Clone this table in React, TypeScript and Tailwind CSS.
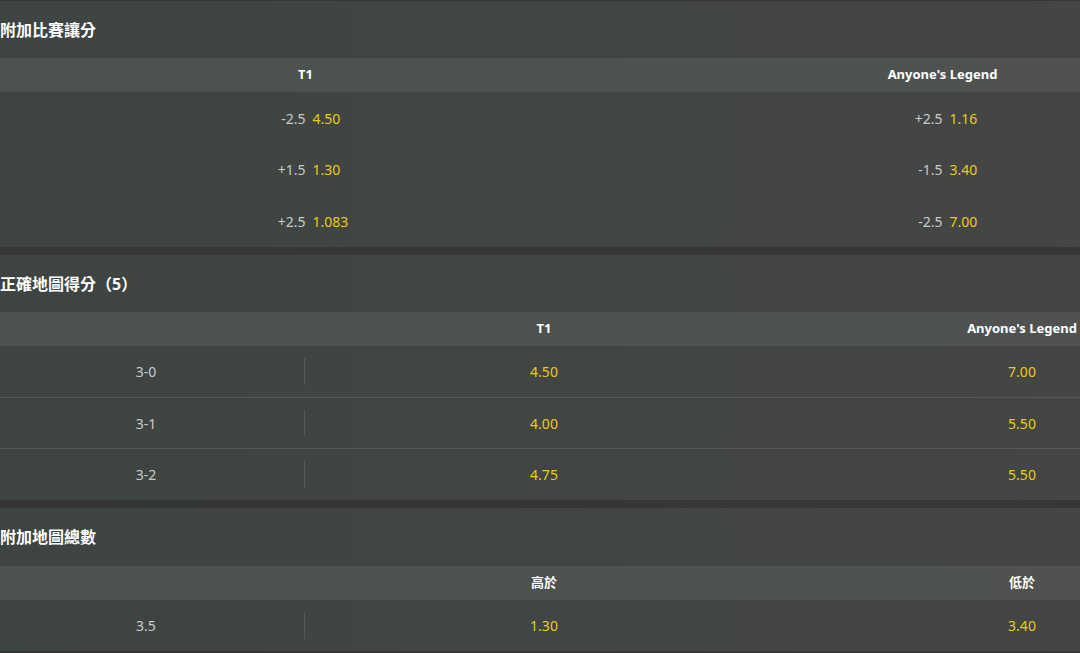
import React from "react";

const font = { fontFamily: '"Noto Sans", "Open Sans", "Noto Sans CJK TC", sans-serif' };

function Title({ text, h = "h-[57px]" }: { text: string; h?: string }) {
  return (
    <div className={`${h} flex items-center pl-[13px] text-[16px] font-bold text-white`}>
      {text}
    </div>
  );
}

function HandicapSection() {
  const rows = [
    ["-2.5", "4.50", "+2.5", "1.16", "h-[52px]"],
    ["+1.5", "1.30", "-1.5", "3.40", "h-[51px]"],
    ["+2.5", "1.083", "-2.5", "7.00", "h-[52px]"],
  ];
  const Cell = ({ h, o }: { h: string; o: string }) => (
    <div className="flex items-center pl-[7px]">
      <div className="flex-1 text-right text-[#c9cbc9]">{h}</div>
      <div className="flex-1 text-left pl-[7px] text-[#eccb14]">{o}</div>
    </div>
  );
  return (
    <div>
      <Title text="附加比賽讓分" />
      <div className="h-[34px] grid grid-cols-2 items-center bg-gradient-to-r from-[#4a514e] to-[#505250] text-[13px] font-bold text-white">
        <div className="text-center">T1</div>
        <div className="text-center">Anyone's Legend</div>
      </div>
      {rows.map((r, i) => (
        <div key={i} className={`${r[4]} grid grid-cols-2 items-center text-[14px]`}>
          <Cell h={r[0]} o={r[1]} />
          <Cell h={r[2]} o={r[3]} />
        </div>
      ))}
    </div>
  );
}

function ThreeColSection({
  title,
  titleH,
  h1,
  h2,
  rows,
}: {
  title: string;
  titleH?: string;
  h1: string;
  h2: string;
  rows: string[][];
}) {
  return (
    <div>
      <Title text={title} h={titleH} />
      <div className="h-[34px] grid grid-cols-[318px_478px_478px] items-center bg-gradient-to-r from-[#4a514e] to-[#505250] text-[13px] font-bold text-white">
        <div />
        <div className="text-center">{h1}</div>
        <div className="text-center">{h2}</div>
      </div>
      {rows.map((r, i) => (
        <div
          key={i}
          className={`grid grid-cols-[318px_478px_478px] items-center text-[14px] ${
            i === 0 ? "" : "border-t border-[#555855]"
          } ${i === rows.length - 1 && rows.length > 1 ? "h-[52px]" : "h-[51px]"}`}
        >
          <div className="relative h-full flex items-center justify-center text-[#c9cbc9]">
            {r[0]}
            <div className="absolute right-0 top-[12px] bottom-[12px] w-px bg-[#565956]" />
          </div>
          <div className="text-center text-[#eccb14]">{r[1]}</div>
          <div className="text-center text-[#eccb14]">{r[2]}</div>
        </div>
      ))}
    </div>
  );
}

export default function App() {
  return (
    <div className="w-[1080px] h-[653px] overflow-hidden bg-[#363636]" style={font}>
      <div className="w-[1274px] -ml-[13px] pt-px flex flex-col gap-[8px] bg-[#363636]">
        <div className="bg-gradient-to-r from-[#3e4441] to-[#454645]">
          <HandicapSection />
        </div>
        <div className="bg-gradient-to-r from-[#3e4441] to-[#454645]">
          <ThreeColSection
            title="正確地圖得分（5）"
            h1="T1"
            h2="Anyone's Legend"
            rows={[
              ["3-0", "4.50", "7.00"],
              ["3-1", "4.00", "5.50"],
              ["3-2", "4.75", "5.50"],
            ]}
          />
        </div>
        <div className="bg-gradient-to-r from-[#3e4441] to-[#454645]">
          <ThreeColSection
            title="附加地圖總數"
            titleH="h-[58px]"
            h1="高於"
            h2="低於"
            rows={[["3.5", "1.30", "3.40"]]}
          />
        </div>
      </div>
    </div>
  );
}
